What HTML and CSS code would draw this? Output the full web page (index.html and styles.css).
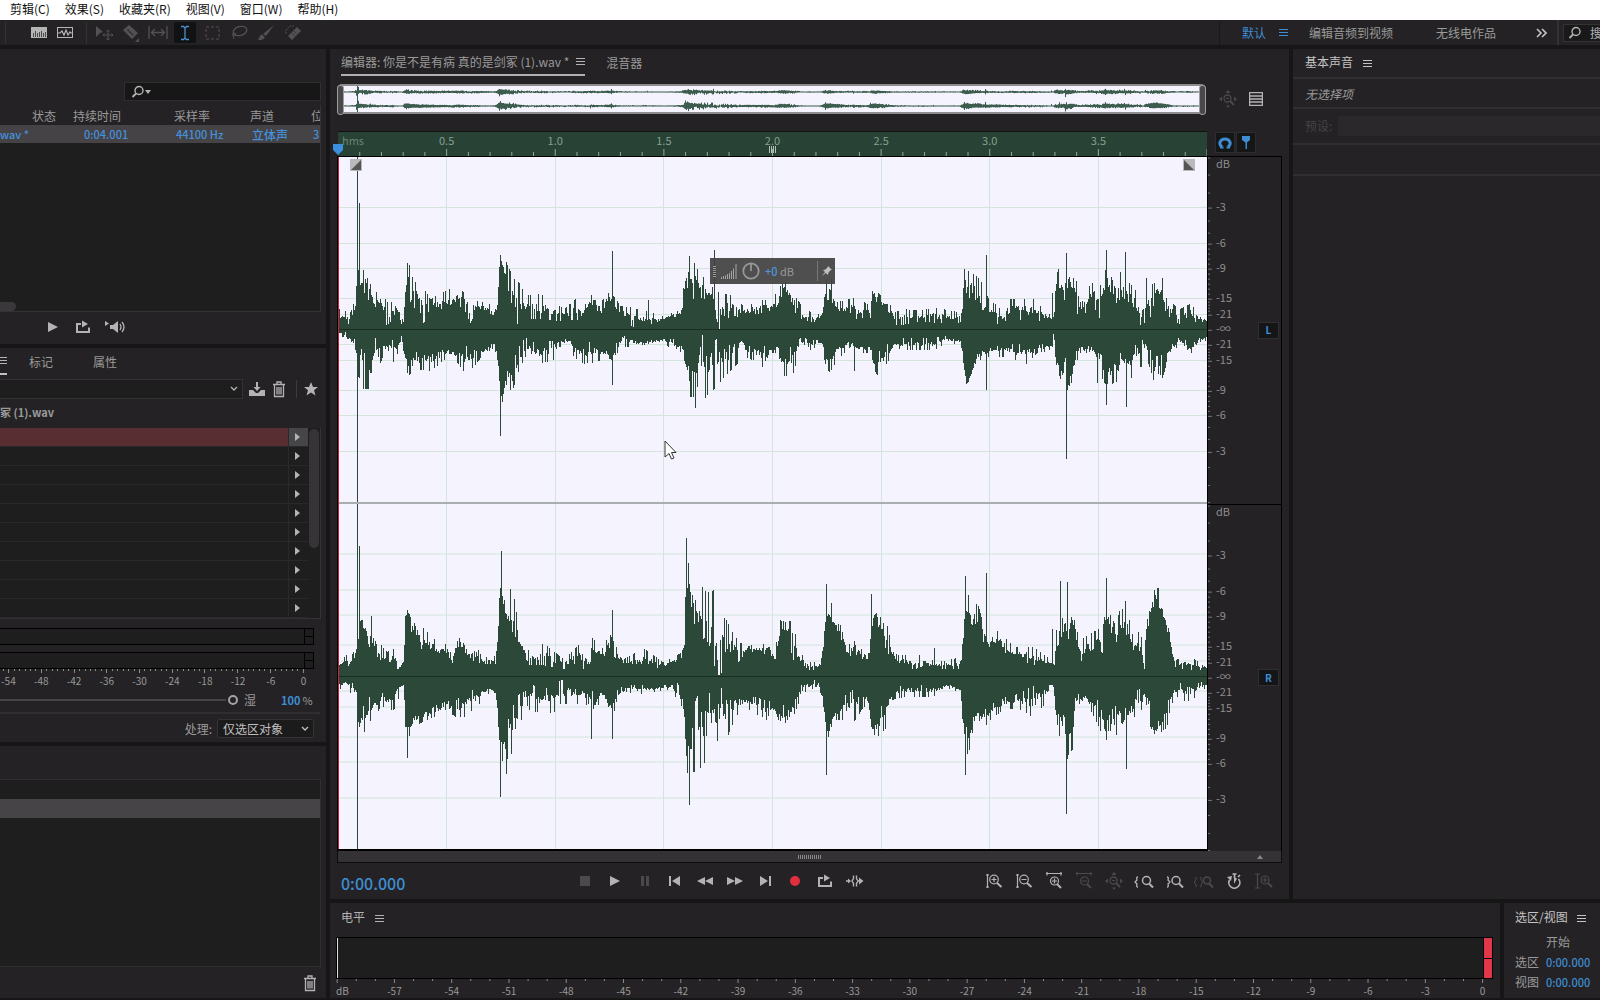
FILE: index.html
```html
<!DOCTYPE html>
<html lang="zh-CN">
<head>
<meta charset="utf-8">
<title>音频编辑器</title>
<link rel="stylesheet" href="styles.css">
</head>
<body>
<svg class="defs" aria-hidden="true">
  <symbol id="i-menu" viewBox="0 0 9 9"><path d="M0 1.5h9M0 4.5h9M0 7.5h9" stroke="currentColor" fill="none"/></symbol>
  <symbol id="i-play" viewBox="0 0 18 18"><path d="M4 4l10 5-10 5z" fill="currentColor"/></symbol>
  <symbol id="i-loop" viewBox="0 0 18 18"><path d="M7 6H3v8h12V9.500" stroke="currentColor" stroke-width="2" fill="none"/><path d="M8 2.500l6 3.500-6 3.500z" fill="currentColor"/></symbol>
  <symbol id="i-trash" viewBox="0 0 16 18"><path d="M2 4.500h12M3.500 4.500v12h9v-12M6 7v7.500M8 7v7.500M10 7v7.500M6 4V2h4v2" stroke="currentColor" stroke-width="1.300" fill="none"/></symbol>
  <symbol id="i-search" viewBox="0 0 14 14"><circle cx="8" cy="5.500" r="4" stroke="currentColor" stroke-width="1.400" fill="none"/><path d="M5 8.500L1.500 12" stroke="currentColor" stroke-width="1.800"/></symbol>
  <symbol id="i-chev" viewBox="0 0 8 6"><path d="M1 1l3 3 3-3" stroke="currentColor" stroke-width="1.300" fill="none"/></symbol>
  <symbol id="i-star-zoom" viewBox="0 0 18 18"><circle cx="8.500" cy="8.500" r="3.500" stroke="currentColor" stroke-width="1.300" fill="none"/><path d="M11 11l4 4" stroke="currentColor" stroke-width="2"/><path d="M7 8.500h3" stroke="currentColor"/><path d="M9 0l2.500 3h-5zM9 18l2-2.500H7zM0 9l3-2.500v5zM18 9l-3-2.500v5z" fill="currentColor"/></symbol>
</svg>

<nav class="menubar">
  <a href="#">剪辑(C)</a><a href="#">效果(S)</a><a href="#">收藏夹(R)</a><a href="#">视图(V)</a><a href="#">窗口(W)</a><a href="#">帮助(H)</a>
</nav>

<header class="toolbar">
  <div class="views">
    <button aria-label="波形"><svg width="18" height="14" viewBox="0 0 18 14"><rect x="1" y="1" width="16" height="11" fill="#b5b5b5"/><path d="M3.500 7v4M5.500 5v6M7.500 7v4M9.500 6v5M11.500 5v6M13.500 7v4M15.500 6v5" stroke="#4a4a4a"/></svg></button>
    <button aria-label="频谱"><svg width="18" height="14" viewBox="0 0 18 14"><rect x="1.500" y="1.500" width="15" height="10" fill="none" stroke="#b5b5b5"/><path d="M2 7h2l2-2 2 4 2-5 2 5 2-3 1 1h2" fill="none" stroke="#b5b5b5" stroke-width="1.200"/></svg></button>
  </div>
  <div class="tools">
    <button aria-label="移动"><svg width="20" height="18" viewBox="0 0 20 18"><path d="M2 2l7 6-3 1-4 4z" fill="currentColor"/><path d="M14 6v10M9 11h10M12.500 7.500L14 6l1.500 1.500M12.500 14.500L14 16l1.500-1.500M10.500 9.500L9 11l1.500 1.500M17.500 9.500L19 11l-1.500 1.500" fill="none" stroke="currentColor"/></svg></button>
    <button aria-label="切断"><svg width="20" height="18" viewBox="0 0 20 18"><path d="M8 1l9 8-6 6-9-9z" fill="currentColor"/><path d="M6.500 5.500l5.500 5.500" stroke="#242224" stroke-width="1.500" stroke-dasharray="2 1"/><path d="M18 14v4h-4z" fill="currentColor"/></svg></button>
    <button aria-label="滑动"><svg width="20" height="18" viewBox="0 0 20 18"><path d="M1 2v13M19 2v13M4 8.500h12M7 5L3.500 8.500 7 12M13 5l3.500 3.500L13 12" fill="none" stroke="currentColor" stroke-width="1.300"/></svg></button>
    <button class="on" aria-label="时间选择"><svg width="20" height="18" viewBox="0 0 20 18"><path d="M6 2.500h2.500L10 4l1.500-1.500H14M10 4v10M6 15.500h2.500L10 14l1.500 1.500H14" fill="none" stroke="currentColor" stroke-width="1.300"/></svg></button>
    <button aria-label="框选"><svg width="20" height="18" viewBox="0 0 20 18"><rect x="4" y="3" width="13" height="12" fill="none" stroke="currentColor" stroke-dasharray="3 2"/></svg></button>
    <button aria-label="套索"><svg width="20" height="18" viewBox="0 0 20 18"><ellipse cx="11" cy="7" rx="7" ry="4.500" transform="rotate(-15 11 7)" fill="none" stroke="currentColor" stroke-width="1.300"/><path d="M5 9c-3 1-1 4 1 2s-1-3-2 0l1 4" fill="none" stroke="currentColor"/></svg></button>
    <button aria-label="画笔"><svg width="20" height="18" viewBox="0 0 20 18"><path d="M18 1l-8 11-3-2zM6 10.500l3 3c-2 3-5 2.500-7 2.500 2-2 1-5 4-5.500z" fill="currentColor"/></svg></button>
    <button aria-label="修复"><svg width="20" height="18" viewBox="0 0 20 18"><path d="M14 3l4 4-9 9-4-4z" fill="currentColor"/><path d="M3 10V6l4-4h4" fill="none" stroke="currentColor" stroke-dasharray="2 1"/><path d="M9 9l4 4M11 7l4 4" stroke="#242224" stroke-dasharray="1 1"/></svg></button>
  </div>
  <div class="workspaces">
    <a href="#" class="cur">默认</a><button class="cur" aria-label="菜单"><svg width="9" height="9"><use href="#i-menu"/></svg></button>
    <a href="#" class="w1">编辑音频到视频</a><a href="#" class="w2">无线电作品</a>
    <button class="more" aria-label="更多"><svg width="11" height="10" viewBox="0 0 11 10"><path d="M1 1l4 4-4 4M6 1l4 4-4 4" fill="none" stroke="currentColor" stroke-width="1.600"/></svg></button>
  </div>
  <label class="help"><svg width="14" height="14"><use href="#i-search"/></svg><input type="search" placeholder="搜索帮助" aria-label="搜索帮助"></label>
</header>

<main class="work">
  <div class="left">
    <section class="panel files">
      <label class="filter"><svg width="14" height="14"><use href="#i-search"/></svg><svg width="6" height="4" viewBox="0 0 6 4"><path d="M0 0h6L3 4z" fill="currentColor"/></svg><input type="search" aria-label="筛选文件"></label>
      <div class="list">
        <table>
          <thead><tr><th class="c0"></th><th class="c1">状态</th><th class="c2">持续时间</th><th class="c3">采样率</th><th class="c4">声道</th><th>位</th></tr></thead>
          <tbody><tr><td>wav *</td><td></td><td class="dur">0:04.001</td><td class="rate">44100 Hz</td><td class="chan">立体声</td><td class="bits">3</td></tr></tbody>
        </table>
        <div class="hscroll"></div>
      </div>
      <div class="mini">
        <button aria-label="播放"><svg width="18" height="18"><use href="#i-play"/></svg></button>
        <button aria-label="循环"><svg width="18" height="18"><use href="#i-loop"/></svg></button>
        <button aria-label="自动播放"><svg width="22" height="18" viewBox="0 0 22 18"><path d="M1 3l4 2.500L1 8zM6 7h3l5-4v12l-5-4H6z" fill="currentColor"/><path d="M16 6q2 3 0 6M18 4q4 5 0 10" fill="none" stroke="currentColor" stroke-width="1.300"/></svg></button>
      </div>
    </section>

    <section class="panel rack">
      <div class="tabs"><button class="sel" aria-label="菜单"><svg width="9" height="9"><use href="#i-menu"/></svg></button><a href="#" class="t1">标记</a><a href="#">属性</a></div>
      <div class="preset">
        <button class="drop" aria-label="预设"><svg width="8" height="6"><use href="#i-chev"/></svg></button>
        <button aria-label="保存"><svg width="18" height="18" viewBox="0 0 18 18"><path d="M1 10h4l3 3h2l3-3h4v6H1z" fill="currentColor"/><path d="M9 2v7" stroke="currentColor" stroke-width="2"/><path d="M5.500 7h7L9 11z" fill="currentColor"/></svg></button>
        <button aria-label="删除"><svg width="16" height="18"><use href="#i-trash"/></svg></button>
        <button class="fav" aria-label="收藏"><svg width="14" height="14" viewBox="0 0 14 14"><path d="M7 0l2 5h5l-4 3.200 1.500 5.300L7 10.500l-4.500 3L4 8.200 0 5h5z" fill="currentColor"/></svg></button>
      </div>
      <h2 class="file">冢 (1).wav</h2>
      <div class="slots">
        <ol>
          <li class="hot"><button aria-label="插槽 1"></button></li><li><button aria-label="插槽 2"></button></li><li><button aria-label="插槽 3"></button></li><li><button aria-label="插槽 4"></button></li><li><button aria-label="插槽 5"></button></li><li><button aria-label="插槽 6"></button></li><li><button aria-label="插槽 7"></button></li><li><button aria-label="插槽 8"></button></li><li><button aria-label="插槽 9"></button></li><li><button aria-label="插槽 10"></button></li>
        </ol>
        <div class="vscroll"></div>
      </div>
      <div class="bar"><i></i></div>
      <div class="bar"><i></i></div>
      <svg class="minticks" id="miniTicks"></svg>
      <div class="minlabels"><span>-54</span><span>-48</span><span>-42</span><span>-36</span><span>-30</span><span>-24</span><span>-18</span><span>-12</span><span>-6</span><span>0</span></div>
      <div class="mix"><input type="range" id="wet" value="100"><label for="wet">湿</label><output for="wet">100</output><span>%</span></div>
      <div class="process"><label for="proc">处理:</label><span class="pick"><select id="proc"><option>仅选区对象</option></select><svg width="8" height="6"><use href="#i-chev"/></svg></span></div>
    </section>

    <section class="panel history">
      <div class="hlist"><div class="hrow"></div><div class="hrow now"></div></div>
      <button aria-label="删除"><svg width="16" height="18"><use href="#i-trash"/></svg></button>
    </section>
  </div>

  <div class="rest">
    <div class="upper">
      <section class="panel editor">
        <div class="etabs"><div class="sel"><a href="#">编辑器: 你是不是有病 真的是剑冢 (1).wav *</a><button aria-label="菜单"><svg width="9" height="9"><use href="#i-menu"/></svg></button></div><a href="#">混音器</a></div>
        <div class="over">
          <div class="overbox"><svg id="overview" viewBox="0 0 869 26" preserveAspectRatio="none"></svg></div>
          <button class="off" aria-label="缩放"><svg width="18" height="18"><use href="#i-star-zoom"/></svg></button>
          <button aria-label="列表"><svg width="14" height="14" viewBox="0 0 14 14"><path d="M.5.5h13v13H.5zM0 4h14M0 7h14M0 10h14" fill="none" stroke="currentColor" stroke-width="1.500"/></svg></button>
        </div>
        <div class="rulerrow">
          <div class="ruler">
            <span class="unit">hms</span>
            <div class="rlabels"><i></i><span>0.5</span><span>1.0</span><span>1.5</span><span>2.0</span><span>2.5</span><span>3.0</span><span>3.5</span><i></i></div>
            <svg class="rticks" id="rulerTicks"></svg>
            <svg class="rgrip" width="8" height="7" viewBox="0 0 8 7"><path d="M.5 0v7M2.500 0v7M4.500 0v7M6.500 0v7" stroke="#b4c4ba"/></svg>
            <svg class="head" width="12" height="12" viewBox="0 0 12 12"><path d="M1 0h10v6l-5 5-5-5z" fill="#3b8fdc"/></svg>
          </div>
          <div class="snaps">
            <button aria-label="吸附"><svg width="14" height="14" viewBox="0 0 14 14"><path d="M4 11C0 8 2 3 7 3s7 5 3 8" fill="none" stroke="currentColor" stroke-width="3"/><path d="M2 11.500h3.500M8.500 11.500H12" stroke="currentColor" stroke-width="2"/></svg></button>
            <button aria-label="标记"><svg width="14" height="14" viewBox="0 0 14 14"><path d="M3 0h8v4L8 6.500V13H6.500V6.500L3 4z" fill="currentColor"/></svg></button>
          </div>
        </div>
        <div class="waves">
          <div class="canvas">
            <svg id="wave" viewBox="0 0 869 692" preserveAspectRatio="none"></svg>
            <svg class="fade fl" width="12" height="12" viewBox="0 0 12 12"><path d="M0 0h12v12H0z" fill="#b9b9bb"/><path d="M11 1v10H1z" fill="#555"/></svg>
            <svg class="fade fr" width="12" height="12" viewBox="0 0 12 12"><path d="M0 0h12v12H0z" fill="#b9b9bb"/><path d="M1 1v10h10z" fill="#555"/></svg>
            <div class="hud">
              <span class="grip"></span>
              <svg width="16" height="15" viewBox="0 0 16 15"><path d="M.5 13v2M2.500 12v3M4.500 11.500V15M6.500 10v5M8.500 9v6M10.500 7v8M12.500 4.500V15M15 0v15" stroke="#a5a5a5"/></svg>
              <svg width="18" height="18" viewBox="0 0 18 18"><circle cx="9" cy="9" r="7.700" fill="none" stroke="#999" stroke-width="1.700"/><path d="M9 2v7" stroke="#999" stroke-width="1.700"/></svg>
              <span class="gain"><b>+0</b> dB</span>
              <button aria-label="固定"><svg width="10" height="10" viewBox="0 0 10 10"><path d="M6 0l4 4-1.500.3L6.500 6.500 6 9 1 4l2.500-.5 2-2zM3.500 5.500l1 1L0 10z" fill="#c0c0c0"/></svg></button>
            </div>
            <svg class="pointer" width="14" height="21" viewBox="0 0 14 21"><path d="M1 1v16l4-3.500L7.500 19l2.500-1-2.500-5.500H12z" fill="#fff" stroke="#333"/></svg>
          </div>
          <div class="axes">
            <div class="axis"><svg class="db"></svg><button>L</button></div>
            <div class="axis"><svg class="db"></svg><button>R</button></div>
          </div>
        </div>
        <div class="scroll"><i></i><svg width="6" height="4" viewBox="0 0 6 4"><path d="M0 4h6L3 0z" fill="#888"/></svg></div>
        <div class="transport">
          <span class="time">0:00.000</span>
          <div class="play">
            <button class="off" aria-label="停止"><svg width="18" height="18" viewBox="0 0 18 18"><path d="M4 4h10v10H4z" fill="currentColor"/></svg></button>
            <button aria-label="播放"><svg width="18" height="18"><use href="#i-play"/></svg></button>
            <button class="off" aria-label="暂停"><svg width="18" height="18" viewBox="0 0 18 18"><path d="M5 4h3v10H5zM10 4h3v10h-3z" fill="currentColor"/></svg></button>
            <button aria-label="到开头"><svg width="18" height="18" viewBox="0 0 18 18"><path d="M3 4h2v10H3zM14 4v10L6 9z" fill="currentColor"/></svg></button>
            <button aria-label="快退"><svg width="18" height="18" viewBox="0 0 18 18"><path d="M9 5v8L1 9zM17 5v8L9 9z" fill="currentColor"/></svg></button>
            <button aria-label="快进"><svg width="18" height="18" viewBox="0 0 18 18"><path d="M1 5v8l8-4zM9 5v8l8-4z" fill="currentColor"/></svg></button>
            <button aria-label="到结尾"><svg width="18" height="18" viewBox="0 0 18 18"><path d="M4 4v10l8-5zM13 4h2v10h-2z" fill="currentColor"/></svg></button>
            <button aria-label="录制"><svg width="18" height="18" viewBox="0 0 18 18"><circle cx="9" cy="9" r="5" fill="#e0303f"/></svg></button>
            <button aria-label="循环"><svg width="18" height="18"><use href="#i-loop"/></svg></button>
            <button aria-label="跳过"><svg width="18" height="18" viewBox="0 0 18 18"><path d="M0 9h4M12 9h3M7.500 3.500v3l-1.500 2.500 1.500 2.500v3M10.500 3.500v3L12 9l-1.500 2.500v3" stroke="currentColor" stroke-width="1.400" fill="none"/><path d="M13 5.500L17.500 9 13 12.500zM2 6.500L5 9l-3 2.500z" fill="currentColor"/></svg></button>
          </div>
          <div class="zooms">
            <button aria-label="垂直放大"><svg width="18" height="18" viewBox="0 0 18 18"><path d="M2.500 2v14M1 3h3M1 15h3M6.500 7.500h5M9 5v5" stroke="currentColor" stroke-width="1.200"/><circle cx="9" cy="7.500" r="4.300" fill="none" stroke="currentColor" stroke-width="1.200"/><path d="M12 11l4.500 4" stroke="currentColor" stroke-width="2"/></svg></button>
            <button aria-label="垂直缩小"><svg width="18" height="18" viewBox="0 0 18 18"><path d="M2.500 2v14M1 3h3M1 15h3M6.500 7.500h5" stroke="currentColor" stroke-width="1.200"/><circle cx="9" cy="7.500" r="4.300" fill="none" stroke="currentColor" stroke-width="1.200"/><path d="M12 11l4.500 4" stroke="currentColor" stroke-width="2"/></svg></button>
            <button aria-label="水平放大"><svg width="18" height="18" viewBox="0 0 18 18"><path d="M1 1.500h16M2 0v3.500M16 0v3.500M7 9h5M9.500 6.500v5" stroke="currentColor" stroke-width="1.200"/><circle cx="9.500" cy="9" r="4" fill="none" stroke="currentColor" stroke-width="1.200"/><path d="M12 12l4 4" stroke="currentColor" stroke-width="2"/></svg></button>
            <button class="off" aria-label="水平缩小"><svg width="18" height="18" viewBox="0 0 18 18"><path d="M1 1.500h16M2 0v3.500M16 0v3.500M7 9h5" stroke="currentColor" stroke-width="1.200"/><circle cx="9.500" cy="9" r="4" fill="none" stroke="currentColor" stroke-width="1.200"/><path d="M12 12l4 4" stroke="currentColor" stroke-width="2"/></svg></button>
            <button class="off" aria-label="全部缩小"><svg width="18" height="18"><use href="#i-star-zoom"/></svg></button>
            <button aria-label="放大入点"><svg width="20" height="18" viewBox="0 0 20 18"><path d="M4 5Q2 5 3 8l-2 2 2 2q-1 3 1 3" fill="none" stroke="currentColor" stroke-width="1.300"/><circle cx="12.500" cy="8.500" r="4" fill="none" stroke="currentColor" stroke-width="1.500"/><path d="M15 11.500l4 4" stroke="currentColor" stroke-width="2"/></svg></button>
            <button aria-label="放大出点"><svg width="20" height="18" viewBox="0 0 20 18"><path d="M3 5q2 0 1 3l2 2-2 2q1 3-1 3" fill="none" stroke="currentColor" stroke-width="1.300"/><circle cx="12" cy="8.500" r="4" fill="none" stroke="currentColor" stroke-width="1.500"/><path d="M15 11.500l4 4" stroke="currentColor" stroke-width="2"/></svg></button>
            <button class="off" aria-label="缩放至选区"><svg width="20" height="18" viewBox="0 0 20 18"><path d="M3 5Q1 5 2 8L0 10l2 2q-1 3 1 3M6 5q2 0 1 3l2 2-2 2q1 3-1 3" fill="none" stroke="currentColor"/><circle cx="13" cy="8.500" r="3.500" fill="none" stroke="currentColor" stroke-width="1.500"/><path d="M15 11.500l4 4" stroke="currentColor" stroke-width="2"/></svg></button>
            <button aria-label="计时"><svg width="18" height="18" viewBox="0 0 18 18"><path d="M4.500 8a5.500 5.500 0 1 0 9-1M9.500 2v4M7.500 2h4M13 5l2-2" fill="none" stroke="currentColor" stroke-width="1.700"/><path d="M2 5l5-1-1 5zM9 5l3 1.500L9 12z" fill="currentColor"/></svg></button>
            <button class="off" aria-label="重置"><svg width="18" height="18" viewBox="0 0 18 18"><path d="M2.500 2v14M0 2h5M0 16h5M7.500 8h5M10 5.500v5" stroke="currentColor" stroke-width="1.200"/><circle cx="10" cy="8" r="4" fill="none" stroke="currentColor" stroke-width="1.200"/><path d="M13 11l4 4" stroke="currentColor" stroke-width="2"/></svg></button>
          </div>
        </div>
      </section>

      <section class="panel sound">
        <h2>基本声音 <svg width="9" height="9"><use href="#i-menu"/></svg></h2>
        <p class="none">无选择项</p>
        <div class="soundpreset"><label for="sp">预设:</label><input id="sp" disabled></div>
        <div class="blank"></div>
      </section>
    </div>

    <div class="lower">
      <section class="panel levels">
        <h2>电平 <svg width="9" height="9"><use href="#i-menu"/></svg></h2>
        <div class="track"><div class="fill"></div><div class="clip"><i></i><i></i></div></div>
        <svg id="levelScale" class="lscale"></svg>
      </section>
      <section class="panel selview">
        <h2>选区/视图 <svg width="9" height="9"><use href="#i-menu"/></svg></h2>
        <table>
          <tr><td></td><th>开始</th></tr>
          <tr><td>选区</td><td class="v">0:00.000</td></tr>
          <tr><td>视图</td><td class="v">0:00.000</td></tr>
        </table>
      </section>
    </div>
  </div>
</main>
<script src="app.js"></script>
</body>
</html>
```
FILE: styles.css
```css
* { box-sizing: border-box; }
body {
  margin: 0; height: 100vh; min-height: 900px; overflow: hidden;
  display: flex; flex-direction: column;
  background: #171617; color: #9a9a9a;
  font: 12px/18px "Noto Sans CJK SC", "Noto Sans", sans-serif;
}
.defs { display: none; }
svg { display: block; flex: none; }
a { color: inherit; text-decoration: none; white-space: nowrap; }
h2, p, ol { margin: 0; padding: 0; font-size: 12px; font-weight: 400; list-style: none; }
button {
  margin: 0; padding: 0; border: 0; background: none; color: #b4b3b4; font: inherit;
  display: flex; align-items: center; justify-content: center; flex: none;
}
button.off { color: #4b494b; }
input, select { margin: 0; min-width: 0; border: 0; background: none; color: inherit; font: inherit; appearance: none; outline: 0; }

.menubar { height: 20px; flex: none; background: #fff; color: #111; display: flex; gap: 15px; padding: 0 10px; }
.toolbar { height: 25px; flex: none; background: #242224; display: flex; align-items: center; margin-bottom: 4px; }
.views { display: flex; gap: 8px; margin-left: 5px; padding: 0 12px 0 24px; border: 1px solid #343234; border-width: 0 1px; height: 22px; }
.tools { display: flex; gap: 5px; margin-left: 6px; flex: 1; }
.tools button { width: 22px; height: 21px; color: #535153; }
.tools .on { background: #101213; color: #4a90d0; border-radius: 2px; }
.workspaces { height: 25px; border-left: 1px solid #1a191a; border-right: 2px solid #343234; padding: 0 10px 0 22px; display: flex; align-items: center; }
.workspaces .cur { color: #3e8cd2; }
.workspaces button.cur { margin-left: 13px; }
.w1 { margin-left: 21px; }
.w2 { margin-left: 43px; }
.workspaces .more { margin-left: 40px; color: #c4c4c4; }
.help { width: 37px; height: 18px; margin-left: 4px; padding-left: 4px; background: #1a191a; border: 1px solid #343234; border-right: 0; display: flex; align-items: center; gap: 8px; overflow: hidden; color: #b4b3b4; }
.help input { width: 60px; flex: none; padding: 0; }
.help input::placeholder { color: #b4b3b4; }

.work { flex: 1; display: flex; gap: 4px; min-height: 0; padding-bottom: 2px; }
.left { width: 326px; flex: none; display: flex; flex-direction: column; gap: 4px; overflow: hidden; }
.rest { flex: 1; display: flex; flex-direction: column; gap: 4px; min-width: 0; }
.upper, .lower { display: flex; gap: 4px; }
.upper { flex: 1; min-height: 0; }
.panel { background: #242224; }

.files { padding: 33px 5px 8px 0; }
.filter { margin-left: 124px; height: 19px; background: #161716; border: 1px solid #302e30; display: flex; align-items: center; padding-left: 6px; color: #b4b3b4; }
.filter input { flex: 1; }
.list { height: 207px; margin-top: 4px; border-right: 1px solid #343234; border-bottom: 1px solid #343234; background: #1e1e1e; display: flex; flex-direction: column; justify-content: space-between; }
.files table { width: 320px; border-collapse: collapse; table-layout: fixed; white-space: nowrap; }
.files th, .files td { padding: 0; font-weight: 400; text-align: left; overflow: hidden; line-height: 17px; }
.files thead { background: #242224; }
.files th { height: 20px; }
.files td { height: 18px; font-size: 11px; font-weight: 500; }
.files tbody { background: #464346; color: #4390dc; }
.c0 { width: 32px; } .c1 { width: 41px; } .c2 { width: 101px; } .c3 { width: 76px; } .c4 { width: 61px; }
.files .dur { padding-left: 11px; }
.files .rate, .files .chan, .files .bits { padding-left: 2px; }
.files .chan { font-size: 12px; }
.hscroll { width: 16px; height: 9px; background: #3a383a; border-radius: 0 5px 5px 0; }
.mini { display: flex; gap: 12px; padding: 6px 0 0 44px; color: #b4b3b4; }

.tabs { display: flex; height: 27px; align-items: center; }
.tabs .sel { width: 7px; height: 27px; justify-content: flex-end; border-bottom: 2px solid #c0c0c0; }
.t1 { margin: 0 40px 0 22px; }
.preset { display: flex; align-items: center; margin-top: 4px; }
.drop { width: 243px; height: 20px; border: 1px solid #343234; border-left: 0; background: #1e1e1e; justify-content: flex-end; padding-right: 4px; }
.preset button + button { margin-left: 5px; }
.preset .fav { margin-left: 9px; padding-left: 7px; height: 18px; border-left: 1px solid #3c3a3c; }
.file { height: 29px; padding-top: 4px; font-size: 11px; font-weight: 700; }
.slots { display: flex; background: #1e1e1e; border-right: 1px solid #343234; border-bottom: 1px solid #343234; width: 321px; }
.slots ol { width: 308px; }
.slots li { height: 19px; display: flex; justify-content: flex-end; border-bottom: 1px solid #2a282a; }
.slots li button { width: 20px; border-left: 1px solid #2a282a; padding-right: 3px; }
.slots li button::after { content: ""; border: 4px solid transparent; border-left: 5px solid #b4b3b4; border-right: 0; }
.slots .hot { background: #592e33; }
.slots .hot button { background: #464548; }
.vscroll { width: 10px; height: 119px; margin: 1px; background: #363436; border-radius: 5px; }
.bar { width: 314px; height: 17px; margin-top: 7px; border: 1px solid #000; border-left: 0; background: #1e1e1e; display: flex; justify-content: flex-end; }
.slots + .bar { margin-top: 9px; }
.bar i { width: 9px; border-left: 1px solid #000; background: linear-gradient(#000, #000) 0 7px / 100% 1px no-repeat; }
.minticks { width: 320px; height: 4px; }
.minlabels { width: 328px; margin-left: -8px; display: flex; font-size: 10px; line-height: 15px; }
.minlabels span { flex: 1; text-align: center; }
.mix { height: 26px; border-bottom: 2px solid #302e30; display: flex; align-items: center; width: 320px; }
.mix input { width: 238px; height: 12px; margin-right: 6px; background: linear-gradient(#464446, #464446) 0 5px / 226px 2px no-repeat; }
.mix input::-webkit-slider-thumb { appearance: none; width: 10px; height: 10px; border: 2px solid #a5a4a5; border-radius: 50%; background: #242224; }
.mix output { margin-left: 25px; color: #3e8cd2; font-size: 11px; font-weight: 700; }
.mix span { margin-left: 2px; font-size: 11px; }
.process { display: flex; align-items: center; justify-content: flex-end; gap: 5px; padding: 5px 12px 4px 0; }
.pick { width: 97px; height: 19px; border: 1px solid #343234; background: #1c1b1c; border-radius: 2px; display: flex; align-items: center; padding: 0 4px 0 5px; color: #c0c0c0; }
.pick select { flex: 1; padding: 0; height: 17px; }

.history { flex: 1; padding: 33px 5px 6px 0; display: flex; flex-direction: column; }
.hlist { flex: 1; background: #1e1e1e; border: 1px solid #302e30; border-left: 0; }
.hrow { height: 19px; }
.now { background: #464446; }
.history button { margin: 7px 3px 0 auto; }

.editor { flex: 1; min-width: 0; display: flex; flex-direction: column; padding: 0 7px; }
.etabs { display: flex; gap: 21px; padding-left: 4px; }
.etabs > a { line-height: 27px; }
.etabs .sel { display: flex; gap: 7px; height: 27px; align-items: center; border-bottom: 2px solid #b0b0b0; }
.over { display: flex; align-items: center; height: 30px; margin-top: 8px; }
.overbox { flex: 1; height: 30px; border: solid #8c8c8e; border-width: 2px 0; border-radius: 5px; position: relative; background: #f5f4fe; }
.overbox::before, .overbox::after { content: ""; position: absolute; top: -1px; left: 0; width: 5px; height: 28px; border: 1px solid #9c9c9e; border-radius: 3px; background: #4a494a; }
.overbox::after { left: auto; right: 0; }
.overbox svg { width: 100%; height: 26px; }
.over button { width: 18px; margin-left: 13px; }
.over button + button { margin: 0 17px 0 10px; }
.rulerrow { display: flex; margin-top: 17px; }
.ruler { flex: 1; height: 25px; background: #294236; border-top: 1px solid #111; margin-left: 1px; position: relative; font-size: 11px; line-height: 17px; color: #86a091; }
.unit { position: absolute; left: 4px; opacity: .7; }
.rlabels { display: flex; }
.rlabels span { flex: 2; text-align: center; }
.rlabels i { flex: 1; }
.rticks { width: 100%; height: 7px; }
.rgrip { position: absolute; left: calc(50% - 4px); top: 14px; }
.head { position: absolute; left: -6px; top: 12px; z-index: 1; }
.snaps { width: 75px; padding: 1px 0 0 8px; display: flex; gap: 1px; }
.snaps button { width: 20px; height: 21px; background: #151616; border: 1px solid #2e2c2e; color: #3e8cd2; }
.waves { flex: 1; min-height: 0; display: flex; border: 1px solid #000; border-bottom: 0; }
.canvas { flex: 1; position: relative; background: #f5f4fe; border-bottom: 2px solid #000; }
#wave { position: absolute; width: 100%; height: 100%; }
.fade { position: absolute; top: 2px; }
.fl { left: 12px; } .fr { right: 12px; }
.hud { position: absolute; left: 372px; top: 101px; width: 125px; height: 26px; background: rgba(68, 68, 68, .94); display: flex; align-items: center; gap: 5px; padding-left: 3px; color: #9a9a9a; font-size: 11px; }
.grip { width: 3px; height: 11px; background: repeating-linear-gradient(#999 0 1px, #444 1px 2px); }
.gain { flex: 1; }
.gain b { color: #4d96dc; font-weight: 500; }
.hud button { width: 18px; height: 20px; border-left: 1px solid #777; }
.pointer { position: absolute; left: 326px; top: 283px; }
.axes { width: 74px; border-left: 1px solid #000; display: flex; flex-direction: column; }
.axis { flex: 1; min-height: 0; display: flex; align-items: center; }
.axis + .axis { border-top: 1px solid #000; }
.db { width: 50px; height: 100%; overflow: visible; fill: #8f8f8f; font-size: 11px; }
.axis button { width: 21px; height: 17px; border: 1px solid #302e30; background: #141516; color: #3e8cd2; font-size: 10px; font-weight: 700; }
.scroll { height: 12px; border: solid #0c0c0c; border-width: 0 1px 1px; background: #343234; display: flex; align-items: center; justify-content: flex-end; padding-right: 18px; }
.scroll i { width: 24px; height: 4px; margin-right: 435px; background: repeating-linear-gradient(90deg, #888 0 1px, #343234 1px 2px); }
.transport { height: 36px; display: flex; align-items: center; padding-left: 4px; }
.time { width: 235px; font-size: 16px; line-height: 20px; padding-top: 3px; color: #3e8cd2; font-weight: 500; }
.play { display: flex; gap: 12px; flex: 1; }
.zooms { display: flex; gap: 12px; padding-right: 9px; }
.zooms button { width: 18px; }

.sound { width: 307px; flex: none; overflow: hidden; }
h2 svg { display: inline-block; margin-left: 7px; vertical-align: -1px; }
.sound h2 { height: 30px; padding: 4px 12px; border-bottom: 2px solid #302e30; color: #c4c4c4; }
.none { height: 30px; padding: 6px 12px; border-bottom: 2px solid #302e30; font-style: italic; }
.soundpreset { height: 36px; display: flex; gap: 6px; align-items: center; padding-left: 12px; border-bottom: 2px solid #302e30; color: #454345; }
.soundpreset input { flex: 1; height: 20px; background: #2a282a; }
.blank { height: 31px; border-bottom: 2px solid #302e30; }

.lower { height: 95px; flex: none; }
.levels { flex: 1; padding: 5px 7px 0 6px; min-width: 0; }
.levels h2 { height: 29px; padding-left: 5px; color: #b4b3b4; }
.track { height: 42px; border: 1px solid #000; background: #1e1e1e; display: flex; }
.fill { flex: 1; border-left: 1px solid #e0e0e0; }
.clip { width: 9px; background: #000; padding-left: 1px; display: flex; flex-direction: column; gap: 1px; }
.clip i { flex: 1; background: #e0374b; }
.lscale { width: 100%; height: 18px; fill: #9a9a9a; font-size: 10px; overflow: visible; }
.selview { width: 96px; flex: none; padding-top: 5px; overflow: hidden; }
.selview h2 { padding-left: 11px; color: #c4c4c4; white-space: nowrap; }
.selview table { margin: 7px 0 0 11px; border-collapse: collapse; }
.selview td, .selview th { padding: 0 7px 2px 0; font-weight: 400; text-align: center; }
.selview th { padding-right: 27px; }
.selview td + .v { padding-right: 0; text-align: left; }
.selview .v { font-size: 11px; font-weight: 500; color: #3e8cd2; }
```
FILE: app.js
```js
// Envelope points, "x high low" per point; "x high" alone is a single peak.
// The first string covers the left half of the view, the second the right half (three units per pixel).
const envelopes = {
  lu: ["27 60 25;60 50 20;75 90 40;82 180 110;88 380;95 150 120;103 200 120;125 160 80;130 110 50;150 110 60;170 80 20;190 80 40;205 50 10;220 60 30;225 115 110;232 210 150;245 155 60;260 130 90;280 120 30;300 90 70;340 110 40;380 130 80;400 110 70;420 100 30;440 85 60;500 70 45;505 140 130;510 255 200;530 190 80;550 150 50;570 130 20;585 100 40;630 105 40;700 60 30;750 100 40;755 60 50;795 120 70;810 80 50;835 110 90;848 235;852 95 60;870 70 35;920 60 10;955 90;1000 40 30;1055 60 45;1063 185 120;1078 218 100;1100 180 110;1140 130 90;1153 240;1160 110 5;1200 100 50;1240 70 40;1310 90 60",
    "0 90 60;20 110 50;40 145 100;60 130 80;80 90 50;100 60 30;140 45 25;155 50 40;165 145 100;185 150 90;200 80 50;255 95 40;300 70 40;305 130 120;320 110 80;365 80 50;370 50 20;400 60 20;450 55 30;490 65 25;570 50 25;577 100 60;580 180 130;600 170 100;630 145 50;650 225;655 90 30;690 60 20;715 90 40;790 90 35;830 50 30;847 110;850 40 30;858 160 100;870 195 100;880 130 90;889 230;900 160 130;920 140 60;935 110 50;970 140 80;990 130 40;1008 240;1010 190 120;1035 120 50;1050 170 110;1066 232;1075 140 90;1100 110 30;1115 80 20;1130 155;1140 130 50;1160 140 115;1178 155;1190 90 50;1200 80 40;1230 60 20;1260 75 30;1310 30 25"],
  ld: ["27 45 15;45 30 10;75 60 35;82 275;84 180 110;90 190 90;100 170 40;122 175 80;130 150 40;145 110 40;160 75 40;190 95 40;215 40 20;222 80 60;232 135 90;245 130 80;270 120 70;305 120 60;340 90 50;375 90 60;403 125 60;430 110 50;450 85 50;495 65 45;503 110 100;508 180 160;511 320;517 235 200;525 160 140;545 185 110;565 120 60;585 80 30;620 100 50;670 90 40;680 50 30;720 50 30;730 80 50;760 100 40;800 95 50;830 80 60;840 105 85;848 165;855 75 50;880 50 10;920 50 35;1000 35 30;1035 75 35;1060 60 50;1063 110 90;1078 200 130;1096 235;1100 200 140;1115 210 40;1130 190 50;1155 170 50;1180 140 30;1200 120 30;1240 80 20;1270 90 50;1310 120 60",
    "0 70 50;20 110 60;40 135 80;65 140 60;80 90 40;105 40 20;120 60 35;155 45 35;163 120 80;180 125 80;200 90 50;240 50 30;253 125;260 70 40;300 70 50;308 110 90;320 135 80;350 100 50;370 55 40;400 60 30;490 60 30;530 40 20;570 45 30;577 110 60;583 165 140;593 180 150;610 120 100;630 90 60;650 182;655 80 60;700 80 50;770 100 50;800 70 50;845 60 40;850 20 10;858 120 90;870 145 100;885 120 90;889 388;892 200 180;905 150 120;920 90 60;955 65 50;983 160;990 90 70;1002 200 120;1012 235 150;1025 160 90;1045 150 80;1062 100 80;1069 232;1080 160 70;1095 70 40;1110 110 60;1125 100 10;1130 90 50;1150 150 90;1180 180 90;1190 100 60;1205 80 50;1225 40 25;1250 80 40;1310 30 20"],
  ru: ["27 45 20;60 70 25;70 95 40;80 150 60;84 160 100;88 390;103 170 130;125 175 80;145 100 60;170 70 25;195 80 40;205 30 15;220 50 40;225 180 160;232 210 190;250 195 110;270 160 60;285 130 80;305 125 90;325 85 70;355 100 75;362 60 20;370 90 70;390 115 80;410 75 50;435 95 50;455 55 40;495 60 40;503 130 100;508 330 250;514 375;516 270 200;535 230 150;545 280 80;555 200 100;575 110 70;590 75 40;640 95 40;700 50 25;750 95 30;780 60 30;785 145 100;795 90 60;820 80 50;835 130 70;848 197;855 90 60;880 50 35;940 80 25;1000 40 30;1055 70 45;1062 120 80;1066 300 250;1069 415;1072 345 250;1085 270 210;1105 270 100;1130 240 40;1153 250 60;1160 190 10;1190 160 60;1200 140 80;1225 100 50;1250 90 75;1310 95 70",
    "0 100 70;15 70 40;25 165 90;50 160 120;70 165 60;80 80 60;105 50 30;120 40 20;150 45 25;158 100 80;167 200 180;169 275;183 215 150;200 155 140;215 150 110;230 90 60;255 105 70;290 55 45;297 80 60;303 180 150;305 245;318 210 170;335 160 120;350 150 80;365 90 60;380 60 35;430 65 25;465 55 35;493 85;500 40 25;570 55 25;577 100 60;581 175 150;587 300;590 245 180;605 225 120;625 205 130;645 130 100;650 308;655 110 70;670 140 110;695 125 80;730 85 60;790 85 40;840 50 35;848 140;853 40 30;858 190 100;871 285;875 160 110;883 250 110;892 282;897 140 120;904 235 130;915 140 100;935 110 50;970 130 70;988 140 90;995 60 50;1002 225 140;1008 294;1012 200 160;1035 150 110;1050 200 110;1066 225;1072 190 110;1090 105 80;1110 140 50;1120 50 20;1130 160 60;1137 200 190;1153 260 220;1165 262 200;1180 200 170;1195 140 110;1210 60 40;1215 45 25;1245 65 25;1310 25 20"],
  rd: ["27 40 25;45 35 12;75 65 30;82 285;86 185 120;92 150 110;100 160 70;122 190 80;135 120 60;150 90 60;190 100 35;220 30 20;225 155 150;232 246;236 180 130;260 145 110;290 130 110;320 120 90;345 100 80;375 120 80;400 120 60;440 90 45;470 50 35;495 60 35;503 150 120;508 220 180;511 363;517 255 200;529 295;535 240 140;555 210 90;570 140 60;585 80 50;605 110 35;630 100 50;668 110 40;690 80 20;735 80 30;760 90 35;780 80 50;785 190;792 150 60;800 90 60;820 70 50;840 120 90;848 188;860 90 50;880 45 30;920 55 30;1020 40 30;1040 70 25;1060 100 70;1066 295 150;1073 280 150;1078 386;1100 280 90;1130 240 70;1150 190 80;1165 190 60;1190 180 50;1215 120 60;1240 90 60;1310 130 80",
    "0 100 80;25 170 90;40 180 100;65 130 80;80 90 50;100 50 20;140 30 15;155 60 45;163 150 120;169 297;173 185 170;190 130 110;220 130 70;253 130 50;280 90 40;297 100 70;305 170 150;320 180 130;345 155 70;365 70 40;405 60 30;490 60 30;530 35 25;570 50 35;577 140 100;582 250 150;587 297;592 270 180;600 190 150;620 120 100;650 175 110;660 130 90;700 100 70;740 95 60;790 120 40;850 50 30;858 130 100;870 190 110;885 170 90;889 413;892 330 200;897 200 170;905 225 110;920 110 60;945 70 60;980 140 80;1000 180 90;1007 220 150;1025 180 110;1045 170 90;1065 200 110;1069 278;1075 140 100;1100 110 50;1135 80 40;1140 160 140;1153 185 160;1190 150 90;1200 90 60;1215 60 30;1250 75 25;1280 60 25;1310 30 20"]
};

let seed = 7;
const random = () => (seed = (seed * 16807) % 2147483647) / 2147483647;

function columns(parts) {
  const band = [], peaks = {};
  parts.forEach((text, half) => text.split(";").forEach(item => {
    const [u, hi, lo] = item.split(" ").map(Number);
    const x = u / 3 + (half ? 432 : -8);
    if (lo === undefined) peaks[Math.floor(x)] = hi / 3;
    else band.push([x, hi / 3, lo / 3]);
  }));
  const out = [];
  let k = 0;
  for (let x = 0; x < 869; x++) {
    while (k < band.length - 2 && band[k + 1][0] < x) k++;
    const a = band[k], b = band[k + 1];
    const t = Math.max(0, Math.min(1, (x - a[0]) / (b[0] - a[0] || 1)));
    const hi = a[1] + (b[1] - a[1]) * t, lo = a[2] + (b[2] - a[2]) * t;
    const r = random();
    // Mostly mid-height columns, with some reaching the crest and some dropping to the floor.
    const level = r > .8 ? 1.05 : r < .12 ? -.15 : .15 + .5 * random();
    out.push(peaks[x] || lo + (hi - lo) * level);
  }
  return out;
}

const data = {};
for (const key in envelopes) data[key] = columns(envelopes[key]);

function bars(up, down, mid, scale, min) {
  return up.map((h, x) => `M${x + .5} ${(mid - Math.max(min, h * scale)).toFixed(1)}V${(mid + Math.max(min, down[x] * scale)).toFixed(1)}`).join("");
}

const offsets = [15, 31, 61, 86, 122];
const mids = [172.5, 519];
let grid = "";
for (let i = 1; i < 8; i++) grid += `M${Math.floor(i * 108.6)}.5 0V692`;
mids.forEach(m => offsets.forEach(o => { grid += `M0 ${m - o}H869M0 ${m + o}H869`; }));
document.getElementById("wave").innerHTML =
  `<path d="${grid}" stroke="#d2e4dc"/>` +
  `<path d="${bars(data.lu, data.ld, mids[0], 1, 1)}${bars(data.ru, data.rd, mids[1], 1, 1)}" stroke="#2c4839" shape-rendering="crispEdges"/>` +
  `<path d="M19.500 0V692" stroke="#2c4839"/><path d="M0 172.500H869M0 519.500H869" stroke="#1b2e24"/>` +
  `<path d="M0 346H869" stroke="#a9aeb0" stroke-width="2"/><path d="M0 0h1v692h-1z" fill="#d0203a" shape-rendering="crispEdges"/>`;

document.getElementById("overview").innerHTML =
  `<path d="${bars(data.lu, data.ld, 6, .04, .5)}${bars(data.ru, data.rd, 20, .04, .5)}M20.500 0V26" stroke="#3c5d4d"/>`;

let ticks = "";
for (let i = 1; i <= 40; i++) {
  const x = i * 2.5 + "%";
  ticks += `<line x1="${x}" x2="${x}" y1="${i % 5 ? 3 : 0}" y2="7" stroke="#93a89b"/>`;
}
document.getElementById("rulerTicks").innerHTML = ticks;

const names = ["-21", "-15", "-9", "-6", "-3"];
document.querySelectorAll(".db").forEach(svg => {
  let s = `<text x="8" y="11">dB</text><text x="8" y="50%" dy="3">-∞</text><line x1="0" x2="4" y1="50%" y2="50%" stroke="#777"/>`;
  [-1, 1].forEach(sign => {
    offsets.forEach((o, i) => {
      const y = 50 + sign * o / 3.46 + "%";
      s += `<text x="8" y="${y}" dy="3">${names[i]}</text><line x1="0" x2="4" y1="${y}" y2="${y}" stroke="#777"/>`;
    });
    [19, 22, 25, 28, 36, 41, 46, 51, 56, 66, 71, 76, 81, 97, 109, 137, 155, 172].forEach(o => {
      const y = 50 + sign * o / 3.46 + "%";
      s += `<line x1="0" x2="2" y1="${y}" y2="${y}" stroke="#777"/>`;
    });
  });
  svg.innerHTML = s;
});

let mini = "";
for (let i = 0; i <= 55; i++) {
  const x = Math.round(302.5 - i * 5.45) + .5;
  mini += `<path d="M${x} 0v${i % 6 ? 2 : 4}" stroke="#8a8a8a"/>`;
}
document.getElementById("miniTicks").innerHTML = mini;

let level = "";
for (let i = 0; i <= 60; i++) {
  const x = .1 + i * 1.65 + "%";
  level += `<line x1="${x}" x2="${x}" y1="0" y2="${i % 3 ? 2 : 4}" stroke="#8a8a8a"/>`;
  if (i % 3 === 0) level += `<text x="${i ? x : 0}" y="16" text-anchor="${i ? "middle" : "start"}">${i ? i - 60 : "dB"}</text>`;
}
document.getElementById("levelScale").innerHTML = level;
```
